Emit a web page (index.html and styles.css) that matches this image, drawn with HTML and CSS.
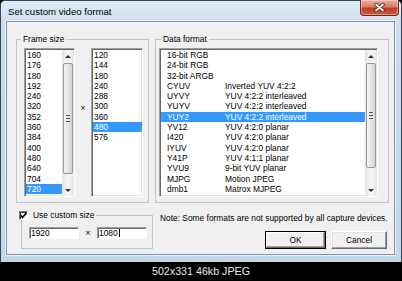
FILE: index.html
```html
<!DOCTYPE html>
<html>

<head>
  <meta charset="utf-8">
  <title>Set custom video format</title>
  <meta name="viewport" content="width=device-width, initial-scale=1">
  <link rel="stylesheet" href="styles.css">
</head>

<body>
  <div class="window">
    <div class="titlebar">
      <span class="title">Set custom video format</span>
      <div class="close">
        <svg width="11" height="9" viewBox="0 0 11 9">
          <path d="M2 1.5 L9 7.5 M9 1.5 L2 7.5" stroke="#4b1b14" stroke-width="3.4" stroke-linecap="round" fill="none"/>
          <path d="M2 1.5 L9 7.5 M9 1.5 L2 7.5" stroke="#fff" stroke-width="1.8" stroke-linecap="round" fill="none"/>
        </svg>
      </div>
    </div>

    <div class="client">
      <div class="top-row">
        <fieldset class="group frame-group">
          <legend>Frame size</legend>
          <div class="sizes">
            <div class="listbox width-list">
              <div class="items">
                <div class="item">160</div>
                <div class="item">176</div>
                <div class="item">180</div>
                <div class="item">192</div>
                <div class="item">240</div>
                <div class="item">320</div>
                <div class="item">352</div>
                <div class="item">360</div>
                <div class="item">384</div>
                <div class="item">400</div>
                <div class="item">480</div>
                <div class="item">640</div>
                <div class="item">704</div>
                <div class="item selected">720</div>
              </div>
              <div class="scrollbar">
                <div class="arrow up"></div>
                <div class="thumb thumb-sizes"></div>
                <div class="track"></div>
                <div class="arrow down"></div>
              </div>
            </div>
            <span class="times">×</span>
            <div class="listbox height-list">
              <div class="items">
                <div class="item">120</div>
                <div class="item">144</div>
                <div class="item">180</div>
                <div class="item">240</div>
                <div class="item">288</div>
                <div class="item">300</div>
                <div class="item">360</div>
                <div class="item selected">480</div>
                <div class="item">576</div>
              </div>
            </div>
          </div>
        </fieldset>

        <fieldset class="group format-group">
          <legend>Data format</legend>
          <div class="listbox format-list">
            <div class="items">
              <div class="item"><span class="code">16-bit RGB</span></div>
              <div class="item"><span class="code">24-bit RGB</span></div>
              <div class="item"><span class="code">32-bit ARGB</span></div>
              <div class="item"><span class="code">CYUV</span><span>Inverted YUV 4:2:2</span></div>
              <div class="item"><span class="code">UYVY</span><span>YUV 4:2:2 interleaved</span></div>
              <div class="item"><span class="code">YUYV</span><span>YUV 4:2:2 interleaved</span></div>
              <div class="item selected"><span class="code">YUY2</span><span>YUV 4:2:2 interleaved</span></div>
              <div class="item"><span class="code">YV12</span><span>YUV 4:2:0 planar</span></div>
              <div class="item"><span class="code">I420</span><span>YUV 4:2:0 planar</span></div>
              <div class="item"><span class="code">IYUV</span><span>YUV 4:2:0 planar</span></div>
              <div class="item"><span class="code">Y41P</span><span>YUV 4:1:1 planar</span></div>
              <div class="item"><span class="code">YVU9</span><span>9-bit YUV planar</span></div>
              <div class="item"><span class="code">MJPG</span><span>Motion JPEG</span></div>
              <div class="item"><span class="code">dmb1</span><span>Matrox MJPEG</span></div>
            </div>
            <div class="scrollbar">
              <div class="arrow up"></div>
              <div class="thumb thumb-formats"></div>
              <div class="track"></div>
              <div class="arrow down"></div>
            </div>
          </div>
        </fieldset>
      </div>

      <div class="bottom-row">
        <fieldset class="group custom-group">
          <legend class="check-legend">
            <span class="checkbox">
              <svg width="7" height="7" viewBox="0 0 7 7">
                <path d="M0.5 3 L2.5 5.5 L6.5 0.8" stroke="#000" stroke-width="1.6" fill="none"/>
              </svg>
            </span>
            Use custom size
          </legend>
          <div class="custom-fields">
            <div class="field">1920</div>
            <span class="times small">×</span>
            <div class="field">1080<span class="caret"></span></div>
          </div>
        </fieldset>

        <div class="side">
          <p class="note">Note: Some formats are not supported by all capture devices.</p>
          <div class="buttons">
            <button class="btn default">OK</button>
            <button class="btn cancel">Cancel</button>
          </div>
        </div>
      </div>
    </div>
  </div>

  <div class="caption">502x331 46kb JPEG</div>
</body>

</html>
```

FILE: styles.css
```css
* {
  padding: 0px;
  margin: 0px;
  box-sizing: border-box;
}

body {
  width: 402px;
  height: 281px;
  overflow: hidden;
  background-color: #000;
  font-family: "Liberation Sans", Arial, sans-serif;
  font-size: 8.4px;
  color: #000;
}

/* window frame */

.window {
  height: 262px;
  padding: 0 6px 0 5px;
  border: 1px solid #34465c;
  border-bottom: none;
  border-radius: 5px 5px 0 0;
  background: linear-gradient(#e2ebf6, #cddcee 22px, #c5d6ea);
}

.titlebar {
  height: 20px;
  display: flex;
  justify-content: space-between;
  align-items: flex-start;
}

.title {
  padding: 5px 0 0 2px;
  font-size: 9.6px;
  line-height: 12px;
  color: #000;
}

.close {
  width: 39px;
  height: 16px;
  margin: -1px -4px 0 0;
  display: flex;
  align-items: center;
  justify-content: center;
  border: 1px solid #6b2a22;
  border-top: none;
  border-radius: 0 0 4px 4px;
  background: linear-gradient(#eab1a4, #d77a66 45%, #c23b24 55%, #d45a3f);
  box-shadow: inset 0 0 0 1px rgba(255, 255, 255, 0.35);
}

.client {
  height: 234px;
  padding: 12px 5px 0 9px;
  background-color: #f0f0f0;
  border: 1px solid #7f93ad;
  box-shadow: 0 0 0 1px #e9f0f9;
}

/* group boxes */

.group {
  border: 1px solid #c2c6ca;
  padding: 0;
}

.group legend {
  line-height: 10px;
  padding: 0 2px;
}

.top-row {
  display: flex;
  gap: 6px;
}

.frame-group {
  width: 133px;
}

.frame-group legend {
  margin-left: 4px;
}

.format-group {
  width: 234px;
}

.format-group legend {
  margin-left: 5px;
}

.sizes {
  display: flex;
  align-items: flex-start;
  padding: 4px 5px 5px 7px;
}

.times {
  width: 16px;
  margin-top: 55px;
  text-align: center;
  line-height: 10px;
}

.times.small {
  width: 18px;
  margin-top: 0;
}

/* list boxes */

.listbox {
  height: 149px;
  display: flex;
  padding: 1px 0 0 1px;
  background-color: #fff;
  border: 1px solid;
  border-color: #a0a0a0 #fff #fff #a0a0a0;
  box-shadow: inset 1px 1px 0 #696969, inset -1px -1px 0 #e3e3e3;
  overflow: hidden;
}

.items {
  flex: 1;
}

.item {
  height: 10.3px;
  line-height: 10.3px;
  padding-left: 1px;
  white-space: nowrap;
}

.item.selected {
  background-color: #3399ff;
  color: #fff;
}

.width-list {
  width: 51px;
}

.height-list {
  width: 52px;
}

.format-list {
  width: 219px;
  margin: 4px 10px 5px 3px;
}

.format-list .item {
  padding-left: 6px;
}

.code {
  display: inline-block;
  width: 58px;
}

/* scroll bars */

.scrollbar {
  width: 12px;
  height: 146px;
  display: flex;
  flex-direction: column;
  background: linear-gradient(to right, #e3e3e3, #f3f3f3 40%, #f3f3f3 60%, #e6e6e6);
}

.arrow {
  height: 12px;
  display: flex;
  align-items: center;
  justify-content: center;
}

.arrow::before {
  content: "";
  border-left: 3px solid transparent;
  border-right: 3px solid transparent;
}

.arrow.up::before {
  border-bottom: 3px solid #333;
}

.arrow.down::before {
  border-top: 3px solid #333;
}

.thumb {
  margin: 1px 1px 0 1px;
  display: flex;
  align-items: center;
  justify-content: center;
  border: 1px solid #999;
  border-radius: 2px;
  background: linear-gradient(to right, #f4f4f4, #e6e6e6 50%, #d2d2d2);
}

.thumb::before {
  content: "";
  width: 4px;
  height: 5px;
  border-top: 1px solid #555;
  border-bottom: 1px solid #555;
  background: linear-gradient(#555, #555) center / 100% 1px no-repeat;
}

.thumb-sizes {
  height: 111px;
}

.thumb-formats {
  height: 105px;
}

.track {
  flex: 1;
}

/* custom size */

.bottom-row {
  display: flex;
  margin-top: 7px;
}

.custom-group {
  width: 132px;
  margin-left: 5px;
}

.check-legend {
  display: flex;
  align-items: center;
  margin-left: -5px;
}

.checkbox {
  width: 9px;
  height: 9px;
  margin-right: 5px;
  display: flex;
  align-items: center;
  justify-content: center;
  background-color: #fff;
  border: 1px solid;
  border-color: #7a7a7a #fff #fff #7a7a7a;
  box-shadow: inset 1px 1px 0 #404040;
}

.custom-fields {
  display: flex;
  align-items: center;
  padding: 7px 5px 6px 7px;
}

.field {
  width: 50px;
  height: 12px;
  display: flex;
  align-items: center;
  line-height: 10px;
  padding-left: 1px;
  background-color: #fff;
  border: 1px solid;
  border-color: #a0a0a0 #fff #fff #a0a0a0;
  box-shadow: inset 1px 1px 0 #696969;
}

.caret {
  width: 1px;
  height: 8px;
  margin-left: 1px;
  background-color: #000;
}

/* note and buttons */

.side {
  flex: 1;
  margin-left: 7px;
}

.note {
  margin-top: 3px;
  line-height: 10px;
  white-space: nowrap;
}

.buttons {
  display: flex;
  justify-content: flex-end;
  gap: 5px;
  margin: 8px 2px 0 0;
}

.btn {
  height: 18px;
  font-family: inherit;
  font-size: 8.4px;
  color: #000;
  background-color: #f0f0f0;
  border: 1px solid;
  border-color: #fff #696969 #696969 #fff;
  box-shadow: inset -1px -1px 0 #a0a0a0, inset 1px 1px 0 #e3e3e3;
}

.btn.default {
  width: 61px;
  border-color: #000;
  box-shadow: inset -1px -1px 0 #696969, inset 1px 1px 0 #fff, inset -2px -2px 0 #a0a0a0;
}

.btn.cancel {
  width: 56px;
}

.caption {
  height: 19px;
  line-height: 18px;
  text-align: center;
  font-size: 10.7px;
  color: #e6e6e6;
}
```
